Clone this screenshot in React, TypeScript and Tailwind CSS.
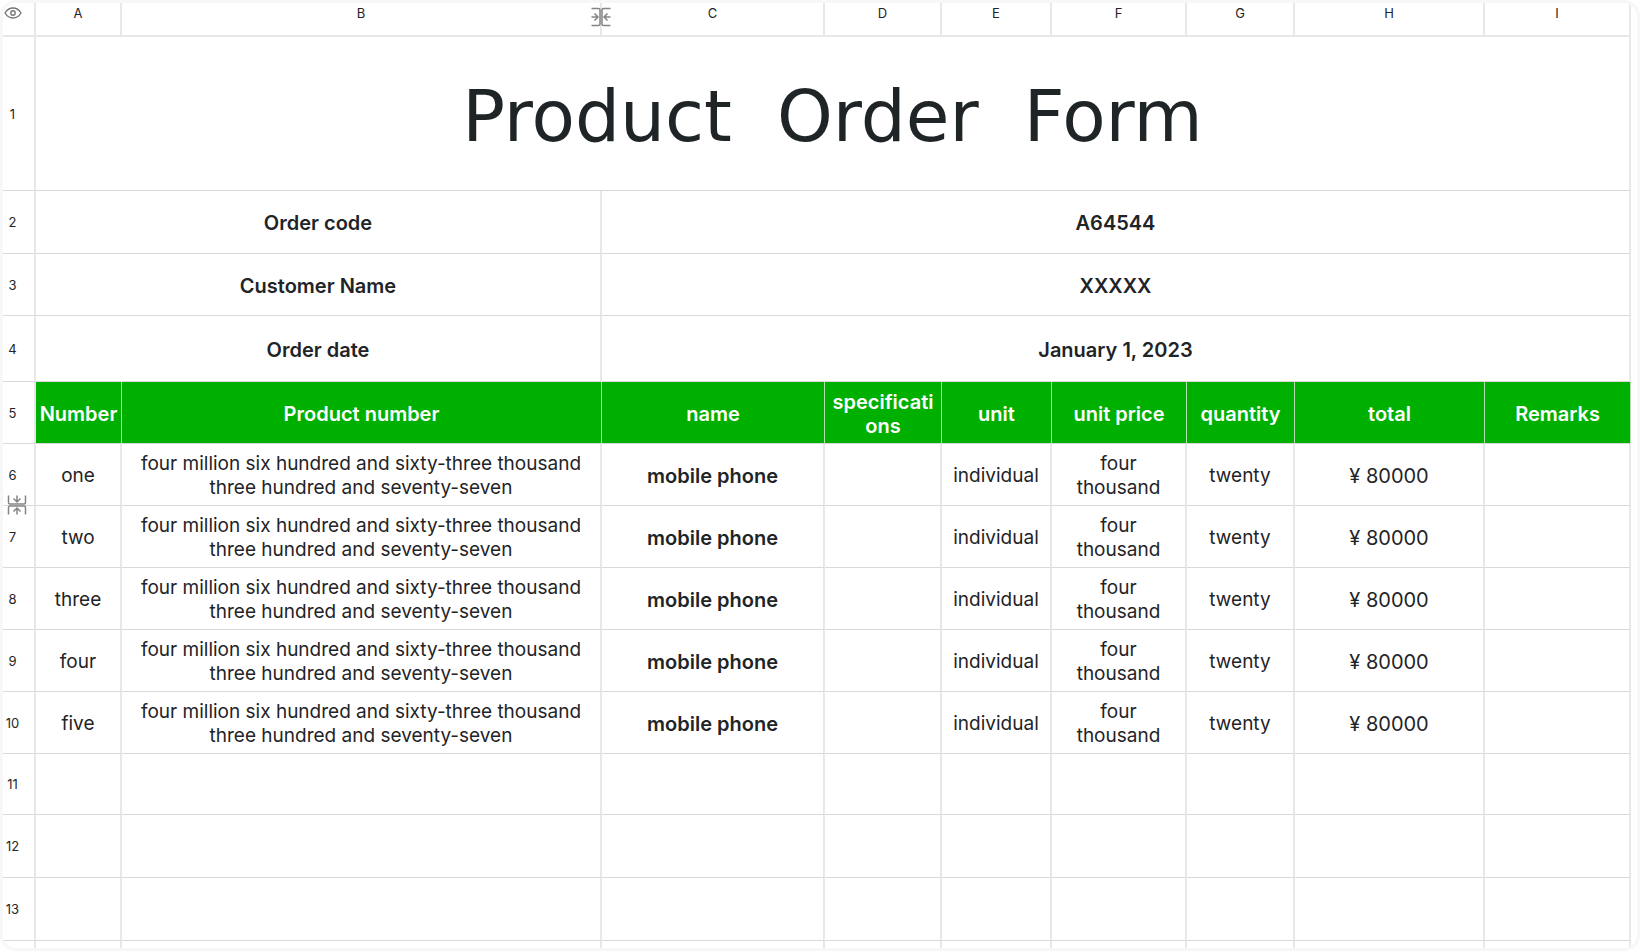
import type { ReactNode } from 'react';

const columns = [
  { letter: 'A', width: 'w-[86px]' },
  { letter: 'B', width: '' },
  { letter: 'C', width: 'w-[223px]' },
  { letter: 'D', width: 'w-[117px]' },
  { letter: 'E', width: 'w-[110px]' },
  { letter: 'F', width: 'w-[135px]' },
  { letter: 'G', width: 'w-[108px]' },
  { letter: 'H', width: 'w-[190px]' },
  { letter: 'I', width: 'w-[146px]' },
];

const summary = [
  { row: 2, height: 'h-[63px]', label: 'Order code', value: 'A64544' },
  { row: 3, height: 'h-[62px]', label: 'Customer Name', value: 'XXXXX' },
  { row: 4, height: 'h-[66px]', label: 'Order date', value: 'January 1, 2023' },
];

const headings = [
  { text: 'Number', padding: '' },
  { text: 'Product number', padding: 'px-1.5' },
  { text: 'name', padding: 'px-1.5' },
  { text: 'specifications', padding: 'px-1.5' },
  { text: 'unit', padding: 'px-1.5' },
  { text: 'unit price', padding: 'px-1.5' },
  { text: 'quantity', padding: '' },
  { text: 'total', padding: 'px-1.5' },
  { text: 'Remarks', padding: 'px-1.5' },
];

const items = ['one', 'two', 'three', 'four', 'five'];

const emptyRows = [
  { row: 11, height: 'h-[61px]' },
  { row: 12, height: 'h-[63px]' },
  { row: 13, height: 'h-[63px]' },
];

const topLine = 'border-r-2 border-b-2 border-[#e8e8e8]';
const line = 'border-r-2 border-b border-r-[#e8e8e8] border-b-[#d9d9d9]';
const cell = `px-1 pt-0.5 ${line}`;

function EyeIcon() {
  return (
    <svg viewBox="0 0 18 12" className="h-3 w-[18px]" fill="none" stroke="#777" strokeWidth="1.4">
      <path d="M1 6C3 2.7 5.7 1 9 1s6 1.7 8 5c-2 3.3-4.7 5-8 5S3 9.3 1 6Z" />
      <circle cx="9" cy="6" r="2.2" />
    </svg>
  );
}

function CollapseIcon({ className }: { className: string }) {
  return (
    <svg viewBox="0 0 20 20" className={className} fill="none" stroke="#858585" strokeWidth="1.5">
      <path d="M0.5 1.5H7.5Q9 1.5 9 3V17Q9 18.5 7.5 18.5H0.5" />
      <path d="M19.5 1.5H12.5Q11 1.5 11 3V17Q11 18.5 12.5 18.5H19.5" />
      <path d="M0.5 10H6.5M3.5 6.5L7 10L3.5 13.5" />
      <path d="M19.5 10H13.5M16.5 6.5L13 10L16.5 13.5" />
    </svg>
  );
}

function RowNumber({ row, children }: { row: number; children?: ReactNode }) {
  return (
    <th scope="row" className={`relative pr-3 text-[13px] leading-4 font-normal ${line}`}>
      {row}
      {children}
    </th>
  );
}

export default function App() {
  return (
    <main className="min-h-screen bg-white font-['Inter','Noto_Sans_CJK_SC',sans-serif] text-[#1f2427]">
      <div className="overflow-hidden rounded-2xl border-[3px] border-[#f7f7f7] bg-white pr-1.5">
        <table className="w-full table-fixed border-separate border-spacing-0 text-center text-[20px] leading-6">
          <colgroup>
            <col className="w-[33px]" />
            {columns.map((c) => (
              <col key={c.letter} className={c.width} />
            ))}
          </colgroup>
          <thead>
            <tr className="h-[34px] text-[13px] leading-4">
              <th className={`pb-3 pl-px ${topLine}`}>
                <button type="button" aria-label="Show hidden cells" className="flex h-4 items-center">
                  <EyeIcon />
                </button>
              </th>
              {columns.map((c) => (
                <th key={c.letter} scope="col" className={`relative pb-3 align-middle font-normal ${topLine}`}>
                  {c.letter}
                  {c.letter === 'B' && (
                    <button
                      type="button"
                      aria-label="Expand hidden columns"
                      className="absolute top-1 -right-[11px] z-10"
                    >
                      <CollapseIcon className="size-5" />
                    </button>
                  )}
                </th>
              ))}
            </tr>
          </thead>
          <tbody>
            <tr className="h-[154px]">
              <RowNumber row={1} />
              <td colSpan={9} className={`pt-1.5 ${line}`}>
                <h1 className="font-['DejaVu_Sans',sans-serif] text-[71px] leading-[80px]">
                  Product&nbsp; Order&nbsp; Form
                </h1>
              </td>
            </tr>
            {summary.map((s) => (
              <tr key={s.row} className={s.height}>
                <RowNumber row={s.row} />
                <th colSpan={2} scope="row" className={`font-semibold ${cell}`}>
                  {s.label}
                </th>
                <td colSpan={7} className={`font-semibold ${cell}`}>
                  {s.value}
                </td>
              </tr>
            ))}
            <tr className="h-[62px]">
              <RowNumber row={5} />
              {headings.map((h) => (
                <th
                  key={h.text}
                  scope="col"
                  className={`border-r border-b border-r-[#b5e0b5] border-b-[#d9d9d9] bg-[#00b000] bg-clip-padding pt-0.5 font-semibold break-all text-white ${h.padding}`}
                >
                  {h.text}
                </th>
              ))}
            </tr>
            {items.map((item, i) => (
              <tr key={item} className="h-[62px] text-[19px]">
                <RowNumber row={i + 6}>
                  {i === 0 && (
                    <button
                      type="button"
                      aria-label="Expand hidden rows"
                      className="absolute right-[7px] -bottom-2.5 z-10"
                    >
                      <CollapseIcon className="size-5 rotate-90" />
                    </button>
                  )}
                </RowNumber>
                <td className={cell}>{item}</td>
                <td className={cell}>
                  four million six hundred and sixty-three thousand three hundred and seventy-seven
                </td>
                <td className={`text-[20px] font-semibold ${cell}`}>mobile phone</td>
                <td className={cell} />
                <td className={cell}>individual</td>
                <td className={`px-4 pt-0.5 ${line}`}>four thousand</td>
                <td className={cell}>twenty</td>
                <td className={`text-[20px] ${cell}`}>¥ 80000</td>
                <td className={cell} />
              </tr>
            ))}
            {emptyRows.map((r) => (
              <tr key={r.row} className={r.height}>
                <RowNumber row={r.row} />
                {columns.map((c) => (
                  <td key={c.letter} className={line} />
                ))}
              </tr>
            ))}
            <tr className="h-[7px]">
              <td className="border-r-2 border-[#e8e8e8]" />
              {columns.map((c) => (
                <td key={c.letter} className="border-r-2 border-[#e8e8e8]" />
              ))}
            </tr>
          </tbody>
        </table>
      </div>
    </main>
  );
}
